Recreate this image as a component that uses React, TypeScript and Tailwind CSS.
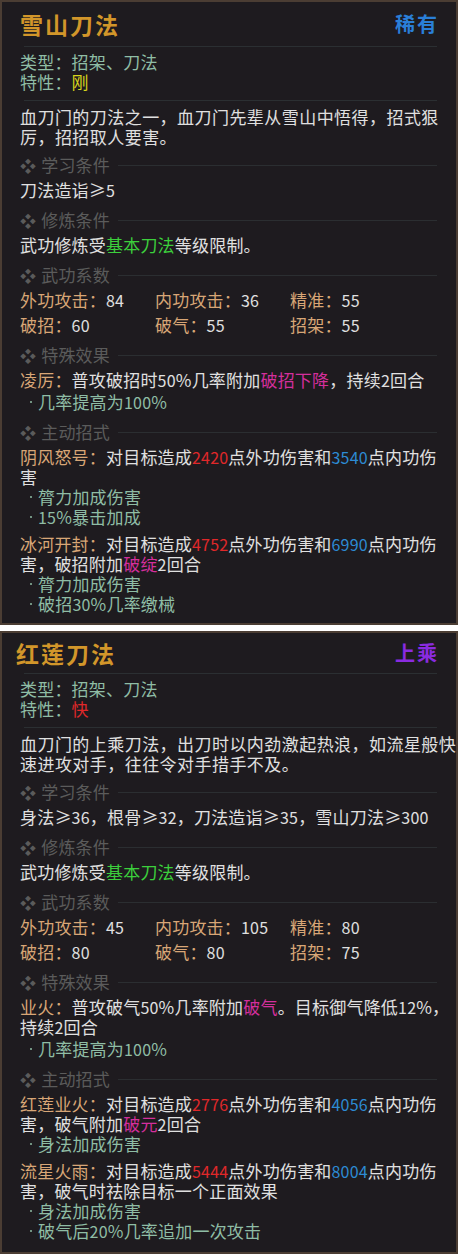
import React from 'react';

type Seg = [string, string?];
type Line = Seg[];

const W = 'text-[#e0e0e0]';
const GREEN = 'text-[#8fbda5]';
const TAN = 'text-[#d8a676]';
const RED = 'text-[#e0282a]';
const BLUE = 'text-[#2d8bd4]';
const PINK = 'text-[#d42f9c]';
const LIME = 'text-[#3ccf3c]';
const YELLOW = 'text-[#d6d41c]';

// digits in the game font are narrower than the CJK glyphs
const Run: React.FC<{ t: string; c: string }> = ({ t, c }) => (
  <span className={`inline-block h-[20px] leading-[20px] align-top ${c}`}>
    {t.split(/(\d+)/).map((p, i) =>
      /^\d+$/.test(p) ? (
        <span key={i} className="text-[16px]">{p}</span>
      ) : (
        p
      )
    )}
  </span>
);

const Text: React.FC<{ line: Line; className?: string }> = ({ line, className = '' }) => (
  <div className={`h-[20px] leading-[20px] whitespace-nowrap ${className}`}>
    {line.map(([t, c], i) => (
      <Run key={i} t={t} c={c || W} />
    ))}
  </div>
);

const Bullet: React.FC<{ line: Line }> = ({ line }) => (
  <div className={`h-[20px] leading-[20px] whitespace-nowrap flex items-center ${GREEN}`}>
    <span className="w-[2px] h-[2px] rounded-full bg-[#8fbda5] ml-[10px] mr-[6px] shrink-0" />
    <span className="h-[20px]">
      {line.map(([t, c], i) => (
        <Run key={i} t={t} c={c || GREEN} />
      ))}
    </span>
  </div>
);

const Header: React.FC<{ title: string }> = ({ title }) => (
  <div className="flex items-center h-[20px] mt-[10px] mb-[5px]">
    <span className="text-[#5b5b5b] whitespace-nowrap h-[20px] leading-[20px]">
      <span className="text-[16px] mr-[5px]">❖</span>
      {title}
    </span>
    <div className="flex-1 h-px bg-[#2b2e31] ml-[8px] mr-[3px]" />
  </div>
);

type Skill = { lines: Line[]; bullets: Line[] };

type CardData = {
  title: string;
  grade: string;
  gradeColor: string;
  titleRow: string;
  trait: Seg;
  desc: string[];
  learn: string;
  stats: [string, string][];
  effect: Line[];
  effectBullets: Line[];
  skills: Skill[];
  height: string;
};

const Card: React.FC<{ d: CardData }> = ({ d }) => (
  <div className={`${d.height} bg-[#1e1b1f] border-2 border-[#4b3d33] pl-[18px] pr-[16px] text-[17px] tracking-[0.2px]`}>
    <div className={`flex items-center justify-between ${d.titleRow}`}>
      <span className="text-[23px] font-bold tracking-[2px] text-[#d2962a]">{d.title}</span>
      <span className={`text-[20px] font-bold tracking-[2px] mr-[1px] ${d.gradeColor}`}>{d.grade}</span>
    </div>
    <div className="h-px bg-[#2b2f32] ml-[4px] mr-[3px]" />
    <div className="mt-[5px]">
      <Text line={[['类型：招架、刀法', GREEN]]} />
      <Text line={[['特性：', GREEN], d.trait]} />
    </div>
    <div className="h-px bg-[#2b2f32] ml-[4px] mr-[3px] mt-[8px]" />
    <div className="mt-[6px] mb-[-2px]">
      {d.desc.map((t, i) => (
        <Text key={i} line={[[t]]} className="tracking-[0.45px]" />
      ))}
    </div>
    <Header title="学习条件" />
    <Text line={[[d.learn]]} />
    <Header title="修炼条件" />
    <Text line={[['武功修炼受'], ['基本刀法', LIME], ['等级限制。']]} />
    <Header title="武功系数" />
    <div className="grid grid-cols-[135px_135px_1fr] gap-y-[5px]">
      {d.stats.map(([k, v], i) => (
        <Text key={i} line={[[k + '：', TAN], [v]]} />
      ))}
    </div>
    <Header title="特殊效果" />
    {d.effect.map((l, i) => (
      <Text key={i} line={l} />
    ))}
    <div className="mt-[2px]">
      {d.effectBullets.map((l, i) => (
        <Bullet key={i} line={l} />
      ))}
    </div>
    <Header title="主动招式" />
    {d.skills.map((s, i) => (
      <div key={i} className={i > 0 ? 'mt-[7px]' : ''}>
        {s.lines.map((l, j) => (
          <Text key={j} line={l} />
        ))}
        {s.bullets.map((l, j) => (
          <Bullet key={j} line={l} />
        ))}
      </div>
    ))}
  </div>
);

const cards: CardData[] = [
  {
    title: '雪山刀法',
    grade: '稀有',
    gradeColor: 'text-[#2a7fd8]',
    titleRow: 'h-[44px]',
    trait: ['刚', YELLOW],
    desc: ['血刀门的刀法之一，血刀门先辈从雪山中悟得，招式狠', '厉，招招取人要害。'],
    learn: '刀法造诣≥5',
    stats: [['外功攻击', '84'], ['内功攻击', '36'], ['精准', '55'], ['破招', '60'], ['破气', '55'], ['招架', '55']],
    effect: [[['凌厉：', TAN], ['普攻破招时50%几率附加'], ['破招下降', PINK], ['，持续2回合']]],
    effectBullets: [[['几率提高为100%']]],
    skills: [
      {
        lines: [
          [['阴风怒号：', TAN], ['对目标造成'], ['2420', RED], ['点外功伤害和'], ['3540', BLUE], ['点内功伤']],
          [['害']],
        ],
        bullets: [[['膂力加成伤害']], [['15%暴击加成']]],
      },
      {
        lines: [
          [['冰河开封：', TAN], ['对目标造成'], ['4752', RED], ['点外功伤害和'], ['6990', BLUE], ['点内功伤']],
          [['害，破招附加'], ['破绽', PINK], ['2回合']],
        ],
        bullets: [[['膂力加成伤害']], [['破招30%几率缴械']]],
      },
    ],
    height: 'h-[625px]',
  },
  {
    title: '红莲刀法',
    grade: '上乘',
    gradeColor: 'text-[#8a2be0]',
    titleRow: 'h-[40px] -ml-[4px]',
    trait: ['快', RED],
    desc: ['血刀门的上乘刀法，出刀时以内劲激起热浪，如流星般快', '速进攻对手，往往令对手措手不及。'],
    learn: '身法≥36，根骨≥32，刀法造诣≥35，雪山刀法≥300',
    stats: [['外功攻击', '45'], ['内功攻击', '105'], ['精准', '80'], ['破招', '80'], ['破气', '80'], ['招架', '75']],
    effect: [
      [['业火：', TAN], ['普攻破气50%几率附加'], ['破气', PINK], ['。目标御气降低12%，']],
      [['持续2回合']],
    ],
    effectBullets: [[['几率提高为100%']]],
    skills: [
      {
        lines: [
          [['红莲业火：', TAN], ['对目标造成'], ['2776', RED], ['点外功伤害和'], ['4056', BLUE], ['点内功伤']],
          [['害，破气附加'], ['破元', PINK], ['2回合']],
        ],
        bullets: [[['身法加成伤害']]],
      },
      {
        lines: [
          [['流星火雨：', TAN], ['对目标造成'], ['5444', RED], ['点外功伤害和'], ['8004', BLUE], ['点内功伤']],
          [['害，破气时祛除目标一个正面效果']],
        ],
        bullets: [[['身法加成伤害']], [['破气后20%几率追加一次攻击']]],
      },
    ],
    height: 'h-[623px]',
  },
];

export default function App() {
  return (
    <div
      className="w-[458px] bg-white flex flex-col gap-[6px]"
      style={{ fontFamily: '"Noto Sans CJK SC", "DejaVu Sans", sans-serif' }}
    >
      {cards.map((d, i) => (
        <Card key={i} d={d} />
      ))}
    </div>
  );
}
